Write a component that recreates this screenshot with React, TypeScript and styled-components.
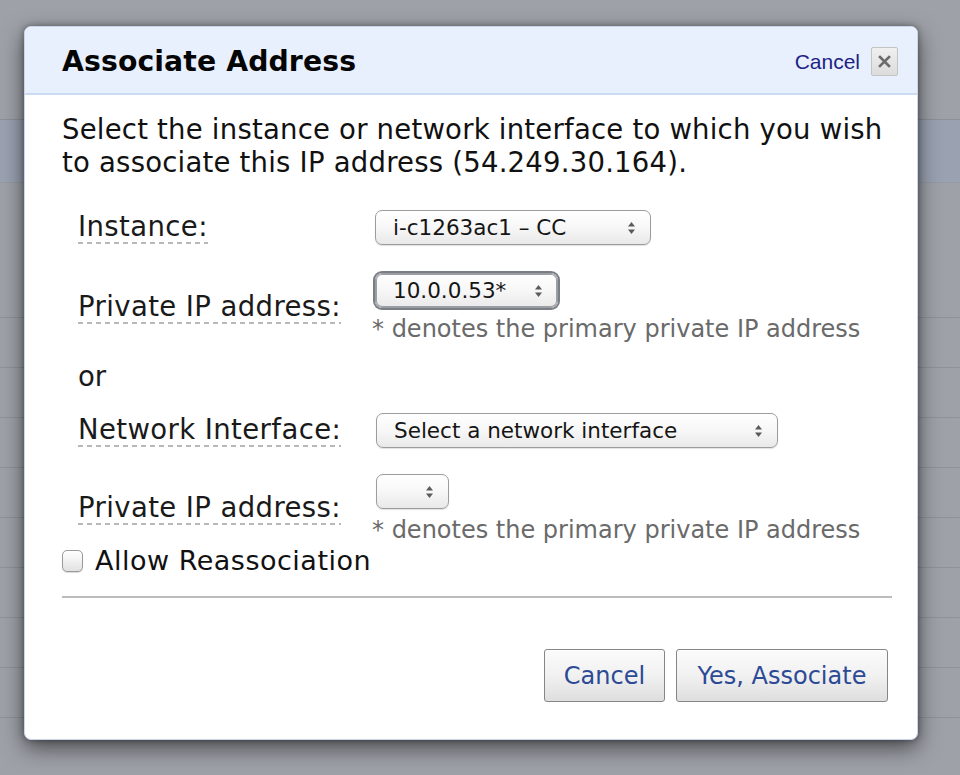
import React from "react";
import styled, { createGlobalStyle } from "styled-components";

const GlobalStyle = createGlobalStyle`
  html, body { margin: 0; padding: 0; }
  body {
    width: 960px;
    height: 775px;
    overflow: hidden;
    background: #9ea1a8;
    font-family: "DejaVu Sans", Verdana, sans-serif;
  }
`;

const Page = styled.div`
  position: relative;
  width: 960px;
  height: 775px;
  overflow: hidden;
`;

/* ---------- the dimmed page behind the dialog ---------- */
const Backdrop = styled.div`
  display: flex;
  flex-direction: column;
  width: 100%;
`;

const BackdropTop = styled.div`
  height: 119px;
  border-bottom: 1px solid #8c9097;
`;

const BackdropBand = styled.div`
  height: 62px;
  background: #9aa1b1;
  border-bottom: 1px solid #959aa3;
`;

const BackdropGap = styled.div`
  height: 134px;
`;

const BackdropRow = styled.div`
  height: 49px;
  border-top: 1px solid #8f9299;
`;

/* ---------- dialog ---------- */
const Dialog = styled.div`
  position: absolute;
  left: 24px;
  top: 26px;
  width: 894px;
  height: 714px;
  background: #fff;
  border-radius: 7px;
  border: 1px solid #c9d6ea;
  box-sizing: border-box;
  box-shadow: 0 8px 22px rgba(0, 0, 0, 0.55), 0 0 6px rgba(0, 0, 0, 0.35);
  overflow: hidden;
  display: flex;
  flex-direction: column;
`;

const Header = styled.div`
  height: 63px;
  background: #e9f0fd;
  border-bottom: 2px solid #cbdbf3;
  display: flex;
  align-items: center;
  justify-content: space-between;
  padding: 3px 19px 0 37px;
  box-sizing: content-box;
`;

const Title = styled.h1`
  margin: 0;
  font-family: "DejaVu Sans", Verdana, sans-serif;
  font-weight: bold;
  font-size: 28.3px;
  color: #050505;
  letter-spacing: 0.1px;
`;

const HeaderActions = styled.div`
  display: flex;
  align-items: center;
  gap: 11px;
`;

const CancelLink = styled.a`
  font-family: "Liberation Sans", Arial, sans-serif;
  font-size: 21px;
  color: #1d2385;
  text-decoration: none;
  cursor: pointer;
`;

const CloseBox = styled.button`
  width: 27px;
  height: 29px;
  padding: 0;
  border: 1px solid #c3c3c3;
  border-radius: 2px;
  background: linear-gradient(#f0f0f0, #dcdcdc);
  display: flex;
  align-items: center;
  justify-content: center;
`;

const Body = styled.div`
  padding: 18px 26px 0 37px;
  display: flex;
  flex-direction: column;
`;

const Intro = styled.p`
  margin: 0;
  font-size: 27.5px;
  letter-spacing: 0.22px;
  line-height: 33px;
  color: #111;
`;

const Form = styled.div`
  display: flex;
  flex-direction: column;
  padding-left: 16px;
`;

const Row = styled.div<{ $top: number }>`
  display: flex;
  align-items: center;
  margin-top: ${(p) => p.$top}px;
`;

const LabelCell = styled.div`
  width: 297px;
  flex: none;
`;

const Label = styled.span`
  display: inline-block;
  font-size: 27.5px;
  letter-spacing: 0.4px;
  line-height: 31px;
  color: #1a1a1a;
  padding-bottom: 2px;
  background: linear-gradient(to right, #b8b8b8 55%, transparent 55%) repeat-x left bottom / 9px 2px;
`;

const Or = styled.div`
  font-size: 27.5px;
  line-height: 26px;
  color: #1a1a1a;
`;

const FieldCell = styled.div`
  display: flex;
  flex-direction: column;
  align-items: flex-start;
`;

const SelectBox = styled.div<{ $w: number; $focused?: boolean; $inset?: number }>`
  width: ${(p) => p.$w}px;
  height: 35px;
  margin-left: ${(p) => p.$inset ?? 0}px;
  box-sizing: border-box;
  border: 1px solid #9c9c9c;
  border-radius: 7px;
  background: linear-gradient(#ffffff 0%, #f7f7f7 50%, #e9e9e9 100%);
  display: flex;
  align-items: center;
  justify-content: space-between;
  padding: 0 14px 0 17px;
  font-family: "DejaVu Sans", Verdana, sans-serif;
  font-size: 21.5px;
  color: #151515;
  box-shadow: ${(p) =>
    p.$focused ? "0 0 0 2px #7a7f87, inset 0 0 0 1px #9aa0a8" : "0 1px 1px rgba(0,0,0,0.12)"};
`;

const SelectText = styled.span`
  white-space: nowrap;
`;

const Hint = styled.div`
  margin-top: 8px;
  margin-left: -3px;
  font-size: 24px;
  line-height: 26px;
  color: #6a6a6a;
  white-space: nowrap;
`;

const CheckRow = styled.label`
  display: flex;
  align-items: center;
  gap: 12px;
  margin-top: 3px;
`;

const CheckBox = styled.span`
  width: 21px;
  height: 22px;
  box-sizing: border-box;
  border: 1px solid #9a9a9a;
  border-radius: 5px;
  background: linear-gradient(#ffffff, #e2e2e2);
  box-shadow: 0 1px 1px rgba(0, 0, 0, 0.15);
`;

const CheckText = styled.span`
  font-size: 27px;
  letter-spacing: 0.5px;
  line-height: 30px;
  color: #111;
`;

const Divider = styled.hr`
  margin: 20px 0 0 0;
  border: none;
  height: 2px;
  background: #bcbcbc;
  width: 830px;
`;

const Footer = styled.div`
  display: flex;
  justify-content: flex-end;
  gap: 11px;
  margin-top: 51px;
  padding-right: 3px;
`;

const Button = styled.button<{ $w: number }>`
  width: ${(p) => p.$w}px;
  height: 53px;
  border: 1px solid #868686;
  border-radius: 3px;
  background: linear-gradient(#fbfbfb 0%, #f1f1f1 50%, #dedede 100%);
  font-family: "DejaVu Sans", Verdana, sans-serif;
  font-size: 24px;
  color: #2c4a95;
  padding: 0;
  box-shadow: inset 0 1px 0 #fff;
`;

const Arrows = () => (
  <svg width="9" height="14" viewBox="0 0 9 14">
    <path d="M4.5 1 L8 5.5 L1 5.5 Z" fill="#5a5a5a" />
    <path d="M4.5 13 L8 8.5 L1 8.5 Z" fill="#5a5a5a" />
  </svg>
);

const CloseIcon = () => (
  <svg width="13" height="13" viewBox="0 0 13 13">
    <path d="M2 2 L11 11 M11 2 L2 11" stroke="#6b6b6b" strokeWidth="2.6" strokeLinecap="square" />
  </svg>
);

export default function App() {
  return (
    <Page>
      <GlobalStyle />
      <Backdrop>
        <BackdropTop />
        <BackdropBand />
        <BackdropGap />
        {Array.from({ length: 9 }).map((_, i) => (
          <BackdropRow key={i} />
        ))}
      </Backdrop>

      <Dialog>
        <Header>
          <Title>Associate Address</Title>
          <HeaderActions>
            <CancelLink>Cancel</CancelLink>
            <CloseBox aria-label="Close">
              <CloseIcon />
            </CloseBox>
          </HeaderActions>
        </Header>

        <Body>
          <Intro>
            Select the instance or network interface to which you wish to associate this IP address
            (54.249.30.164).
          </Intro>

          <Form>
            <Row $top={31}>
              <LabelCell>
                <Label>Instance:</Label>
              </LabelCell>
              <FieldCell>
                <SelectBox $w={276}>
                  <SelectText>i-c1263ac1 – CC</SelectText>
                  <Arrows />
                </SelectBox>
              </FieldCell>
            </Row>

            <Row $top={28}>
              <LabelCell>
                <Label>Private IP address:</Label>
              </LabelCell>
              <FieldCell>
                <SelectBox $w={183} $focused>
                  <SelectText>10.0.0.53*</SelectText>
                  <Arrows />
                </SelectBox>
                <Hint>* denotes the primary private IP address</Hint>
              </FieldCell>
            </Row>

            <Row $top={21}>
              <Or>or</Or>
            </Row>

            <Row $top={24}>
              <LabelCell>
                <Label>Network Interface:</Label>
              </LabelCell>
              <FieldCell>
                <SelectBox $w={402} $inset={1}>
                  <SelectText>Select a network interface</SelectText>
                  <Arrows />
                </SelectBox>
              </FieldCell>
            </Row>

            <Row $top={26}>
              <LabelCell>
                <Label>Private IP address:</Label>
              </LabelCell>
              <FieldCell>
                <SelectBox $w={73} $inset={1}>
                  <span />
                  <Arrows />
                </SelectBox>
                <Hint>* denotes the primary private IP address</Hint>
              </FieldCell>
            </Row>
          </Form>

          <CheckRow>
            <CheckBox />
            <CheckText>Allow Reassociation</CheckText>
          </CheckRow>

          <Divider />

          <Footer>
            <Button $w={121}>Cancel</Button>
            <Button $w={212}>Yes, Associate</Button>
          </Footer>
        </Body>
      </Dialog>
    </Page>
  );
}
